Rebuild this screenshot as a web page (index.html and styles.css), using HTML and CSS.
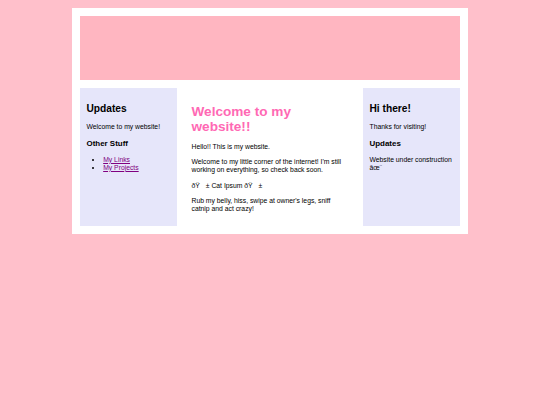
FILE: index.html
```html
<!DOCTYPE html>
<html lang="en">
<head>
<meta charset="utf-8">
<title>My Website</title>
<link rel="stylesheet" href="styles.css">
</head>
<body>
<div class="container">
  <header class="header"></header>
  <div class="columns">
    <aside class="sidebar">
      <h2>Updates</h2>
      <p>Welcome to my website!</p>
      <h3>Other Stuff</h3>
      <ul>
        <li><a href="#links">My Links</a></li>
        <li><a href="#projects">My Projects</a></li>
      </ul>
    </aside>
    <main class="main">
      <h1>Welcome to my website!!</h1>
      <p>Hello!! This is my website.</p>
      <p>Welcome to my little corner of the internet! I'm still working on everything, so check back soon.</p>
      <p class="cat">ðŸ&#x90;± Cat Ipsum ðŸ&#x90;±</p>
      <p>Rub my belly, hiss, swipe at owner's legs, sniff catnip and act crazy!</p>
    </main>
    <aside class="sidebar">
      <h2>Hi there!</h2>
      <p>Thanks for visiting!</p>
      <h3>Updates</h3>
      <p>Website under construction âœ¨</p>
    </aside>
  </div>
</div>
</body>
</html>
```

FILE: styles.css
```css
html {
  background: #ffc0cb;
}
body {
  margin: 8px;
  font-family: "Liberation Sans", Arial, sans-serif;
  font-size: 6.8px;
  color: #000;
}
.container {
  width: 396px;
  box-sizing: border-box;
  margin: 0 auto;
  padding: 8px;
  background: #ffffff;
}
.header {
  height: 64px;
  background: #ffb6c1;
}
.columns {
  display: grid;
  grid-template-columns: 97px 1fr 97px;
  gap: 8px;
  margin-top: 8px;
}
.sidebar {
  background: #e6e6fa;
  padding: 7px 6.5px;
}
.main {
  padding: 7px 6.5px;
}
.main h1 {
  color: #ff69b4;
}
p,
li {
  line-height: 8px;
}
.cat {
  line-height: 9px;
}
a {
  color: #800080;
}
ul {
  padding-left: 2.45em;
}
```
